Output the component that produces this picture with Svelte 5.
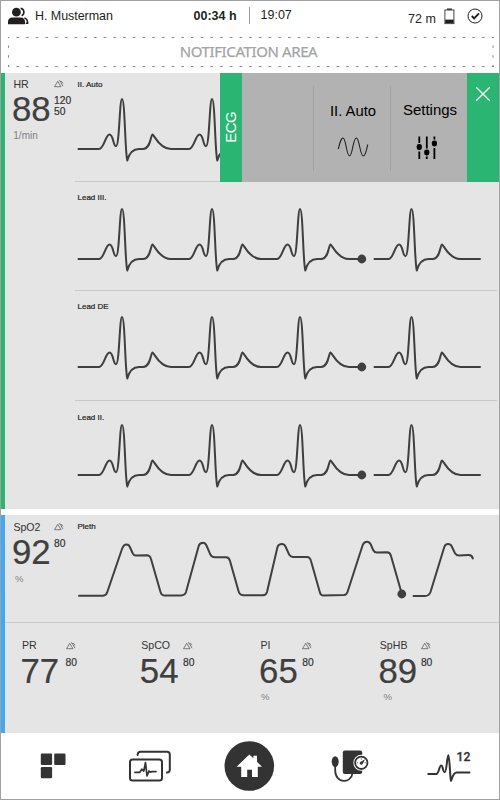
<script>
  const beat =
    'c5 0 6.5 -14.5 10.5 -14.5 s3.5 11.7 6.5 11.7 c3.5 0 3.5 -47.2 6 -47.2 c3 0 3 54 5.3 61.5 c1.7 -6.5 4.7 -11.5 11.7 -11.5 h4 c8 0 7.5 -14 9.5 -14.5 c2 .5 6.5 14.5 18.5 14.5';
  const ecg = `M3.5 60 H24 ${beat} H114 ${beat} H202 ${beat} H287 M299.5 60 H313.5 ${beat} H405`;

  const leads = [
    { label: 'II. Auto', cls: 'first' },
    { label: 'Lead III.', cls: 'second' },
    { label: 'Lead DE', cls: 'third' },
    { label: 'Lead II.', cls: 'fourth' }
  ];

  const small = [
    { label: 'PR', value: '77', limits: ['80'], unit: '', cls: 'small pr' },
    { label: 'SpCO', value: '54', limits: ['80'], unit: '', cls: 'small spco' },
    { label: 'PI', value: '65', limits: ['80'], unit: '%', cls: 'small pi' },
    { label: 'SpHB', value: '89', limits: ['80'], unit: '%', cls: 'small sphb' }
  ];
</script>

{#snippet metric(m)}
  <div class="metric {m.cls}">
    <div class="main">
      <div class="label">{m.label}</div>
      <div class="value">{m.value}</div>
      <div class="unit">{m.unit}</div>
    </div>
    <div class="side">
      <svg class="alarm" width="10" height="8" viewBox="0 0 10 8">
        <path d="M.5 6.7 L3.7 1.3 L7 6.7 Z M4.9 .9 L6 .8 L9 6.2 M7.2 .9 L8.9 3.4" />
      </svg>
      <div class="limits">
        {#each m.limits as l}<div>{l}</div>{/each}
      </div>
    </div>
  </div>
{/snippet}

<div class="device">
  <header>
    <svg class="users" width="22" height="18" viewBox="0 0 22 18">
      <circle cx="8.4" cy="5.2" r="4.4" fill="#231f20" />
      <path d="M0 17.3 V15 Q0 10.8 4.6 10.6 H12.6 Q17 10.8 17 15 V17.3 Z" fill="#231f20" />
      <path d="M12.6 1.4 A3.9 3.9 0 0 1 13.6 8.8 M16.4 11 Q19.6 11.6 19.6 16.3 H17.8" fill="none" stroke="#231f20" stroke-width="1.6" />
    </svg>
    <span class="name">H. Musterman</span>
    <span class="elapsed">00:34 h</span>
    <span class="bar"></span>
    <span class="clock">19:07</span>
    <span class="range">72 m</span>
    <svg class="battery" width="11" height="17" viewBox="0 0 11 17">
      <path d="M3 1.2 H8" stroke="#231f20" stroke-width="1.4" />
      <rect x=".9" y="2" width="9" height="13.6" fill="none" stroke="#444" stroke-width="1" />
      <rect x="1.2" y="11.6" width="8.4" height="3.4" fill="#231f20" />
    </svg>
    <svg class="check" width="16" height="16" viewBox="0 0 16 16">
      <circle cx="8" cy="8" r="7" fill="none" stroke="#231f20" stroke-width="1" />
      <path d="M4.8 8 L7.1 10.3 L12 5.4" fill="none" stroke="#231f20" stroke-width="1.9" />
    </svg>
  </header>

  <div class="notice">
    <svg width="488" height="32" viewBox="0 0 488 32">
      <path d="M1 1.5 H487 M1 30.5 H487" stroke-dasharray="2.6 7.1" stroke-dashoffset="1.3" />
      <path d="M1.5 1 V31 M486 1 V31" stroke-dasharray="2.4 7.3" stroke-dashoffset="1.2" />
    </svg>
    <span>NOTIFICATION AREA</span>
  </div>

  <section class="card ecg">
    {@render metric({ label: 'HR', value: '88', limits: ['120', '50'], unit: '1/min', cls: 'hr' })}
    <div class="leads">
      {#each leads as lead}
        <div class="lead {lead.cls}">
          <span class="tag">{lead.label}</span>
          <svg class="trace" width="423" height="76" viewBox="0 0 423 76">
            <path d={ecg} />
            <circle cx="286.8" cy="60" r="4.4" />
          </svg>
        </div>
      {/each}
    </div>
    <div class="menu">
      <div class="menu-title"><span>ECG</span></div>
      <div class="menu-empty"></div>
      <div class="menu-item auto">
        <span>II. Auto</span>
        <svg width="32" height="22" viewBox="0 0 32 22">
          <path d="M1.3 13 C3 6 4 2 6 2 C9 2 9.5 20 12.5 20 C15.5 20 16 2 19.3 2 C22.5 2 23 20 26.2 20 C28.5 20 29.5 14 30.7 8.5" fill="none" stroke="#222" stroke-width="1.1" />
        </svg>
      </div>
      <div class="menu-item settings">
        <span>Settings</span>
        <svg width="22" height="24" viewBox="0 0 22 24">
          <path d="M3.3 .5 V7 M3.3 15.5 V23 M10.8 .5 V12.5 M10.8 20.6 V23 M18.4 .5 V3.5 M18.4 12 V23" stroke="#000" stroke-width="1.8" />
          <rect x=".7" y="8" width="5.2" height="6" rx="2.3" />
          <rect x="8.2" y="13.4" width="5.2" height="6" rx="2.3" />
          <rect x="15.8" y="4.4" width="5.2" height="6" rx="2.3" />
        </svg>
      </div>
      <div class="menu-close">
        <svg width="16" height="16" viewBox="0 0 16 16">
          <path d="M1.2 1.2 L14.8 14.8 M14.8 1.2 L1.2 14.8" stroke="#fff" stroke-width="1.3" />
        </svg>
      </div>
    </div>
  </section>

  <section class="card spo2">
    <div class="upper">
      {@render metric({ label: 'SpO2', value: '92', limits: ['80'], unit: '%', cls: 'sat' })}
      <div class="pleth">
        <span class="tag">Pleth</span>
        <svg class="trace" width="423" height="70" viewBox="75 535 423 70">
          <path d="M79 595.7 H103 Q106.3 595.5 107.3 592 L122 549 Q123.5 544.5 126.5 544.5 Q129.3 544.5 130.3 548 L132.8 553.5 Q134 555.6 136 555.5 L147 555.2 Q150 555.2 151 559 L160.5 592 Q161.5 595.4 164 595.4 H181 Q185 595.3 186 592 L198.7 546 Q199.7 542.8 203 542.8 Q205.5 542.8 206.7 546 L210.5 554.8 Q211.8 557.3 215 557.3 H226 Q229 557.3 230 561 L238.5 591 Q239.5 595 243 595.2 H263 Q266 595.2 267 592 L277.5 547 Q278.5 544 282 544 Q284.5 544 285.7 547 L289.3 554.8 Q290.7 557 293 557 H307 Q310 557 311 561 L319.5 591 Q320.5 595.4 323 595.4 L344 595.1 Q346.5 595 347.5 592 L362.7 545 Q364 541.7 367 541.7 Q369.8 541.7 371 545 L373.3 550.3 Q374.5 552.7 377 552.6 L387 552.3 Q390 552.3 391 556 L401.3 592 M413.5 596 H425 Q429 596 430.5 592 L444.3 547 Q445.3 544 448 544 Q451 544 452 547 L455 553.2 Q456.3 555.4 459 555.4 L468.5 555.1 Q472 555 472.8 558.5" />
          <circle cx="401.8" cy="594" r="4.4" />
        </svg>
      </div>
    </div>
    <div class="lower">
      {#each small as m}{@render metric(m)}{/each}
    </div>
  </section>

  <nav>
    <svg width="99" height="66" viewBox="4 733 99 66">
      <rect x="40.8" y="753.6" width="11.3" height="11.3" rx="1.2" />
      <rect x="54.2" y="753.6" width="11.3" height="11.3" rx="1.2" />
      <rect x="40.8" y="767" width="11.3" height="11.3" rx="1.2" />
    </svg>
    <svg width="99" height="66" viewBox="103 733 99 66">
      <g class="line">
        <rect x="130" y="759.4" width="32" height="21.2" rx="2.6" />
        <path d="M137.6 755 V754.6 Q138 751.7 140.5 751.7 H167 Q169.8 751.7 169.8 754.5 V770 Q169.6 772.3 167 772.6" />
        <path d="M135 772.4 H139.8 L141.8 769.2 L143.8 771 L145.5 762.5 L147 776 L149 771 L150.2 772.2 L152 771.6 H156" stroke-width="1.7" />
      </g>
    </svg>
    <svg width="99" height="66" viewBox="202 733 99 66">
      <circle cx="249.3" cy="766" r="24.8" />
      <path d="M236.6 766.8 L249.3 754.4 L253.4 758.3 V755.8 H257 V761.8 L262 766.8 H257.8 V777 H252 V769.8 H247.2 V777 H241.2 V766.8 Z" fill="#fff" />
    </svg>
    <svg width="99" height="66" viewBox="301 733 99 66">
      <rect x="342.8" y="750.6" width="19.4" height="23.4" rx="2" />
      <ellipse cx="335.2" cy="761.6" rx="3.5" ry="5.4" />
      <path class="thin" d="M335.2 766 V770.5 C335.2 784 351.5 783.5 352.4 773.5" />
      <circle cx="361.3" cy="762.8" r="8" fill="#fff" />
      <circle class="thin" cx="361.3" cy="762.8" r="6.2" />
      <path d="M365 759.2 L362.6 764 A1.5 1.5 0 1 1 360.4 762 Z" />
      <path d="M356.9 762.8 h1.3 M361.3 758.4 v1.3 M364.6 762.8 h1.3" stroke="#333" stroke-width=".7" />
    </svg>
    <svg width="99" height="66" viewBox="400 733 99 66">
      <path class="line" d="M428.2 774 H436.5 C439 773.5 439.2 765.5 441.2 765.5 C443.2 765.5 442.7 772.2 444.7 772.2 C446.8 772.2 447 755.3 448.4 755.3 C449.6 755.3 450 778 451 780.8 C452.4 778 453.2 772.6 456.6 772.6 H469.5" />
      <text x="456.6" y="761">12</text>
    </svg>
  </nav>
</div>

<style>
  .device {
    box-sizing: border-box;
    width: 500px;
    height: 800px;
    border: 1px solid #a0a0a0;
    background: #fff;
    font-family: 'Liberation Sans', Arial, sans-serif;
    color: #3f3f3f;
    display: flex;
    flex-direction: column;
    overflow: hidden;
  }
  svg { display: block; flex: none; }
  span { white-space: nowrap; }

  header {
    display: flex;
    align-items: flex-start;
    height: 34px;
    flex: none;
    font-size: 12.5px;
    line-height: 16px;
    color: #231f20;
  }
  header > * { flex: none; }
  .users { margin: 6px 0 0 7px; }
  .name { margin: 7px 0 0 5px; width: 80px; letter-spacing: -.05px; }
  .elapsed { margin: 7px 0 0 78.5px; width: 47px; font-weight: bold; }
  .bar { margin: 6px 0 0 8.5px; width: 1px; height: 17px; background: #999; }
  .clock { margin: 6px 0 0 10.5px; width: 34px; }
  .range { margin: 10px 0 0 113.5px; width: 30px; }
  .battery { margin: 7px 0 0 6px; }
  .check { margin: 7px 0 0 12px; }

  .notice {
    height: 37.5px;
    flex: none;
    display: grid;
    justify-content: start;
    align-content: start;
    padding: 1px 0 0 6px;
    box-sizing: border-box;
  }
  .notice svg, .notice span { grid-area: 1 / 1; }
  .notice path { fill: none; stroke: #888; stroke-width: 1; }
  .notice span {
    justify-self: center;
    align-self: start;
    margin-top: 5px;
    font-family: 'Noto Sans', sans-serif;
    font-size: 15px;
    letter-spacing: -.39px;
    color: #a3a4a6;
    -webkit-text-stroke: .25px #a3a4a6;
    line-height: 20px;
    margin-right: 5px;
  }

  .card { display: flex; background: #e5e5e5; flex: none; box-sizing: border-box; }
  .ecg { height: 436.2px; border-left: 4px solid #2ab573; position: relative; }
  .spo2 { margin-top: 6.3px; height: 218px; border-left: 4px solid #3fa9f5; flex-direction: column; }
  .upper { display: flex; height: 107px; border-bottom: 1px solid #c9c9c9; }
  .lower { display: grid; grid-template-columns: repeat(4, 119.3px); padding-left: 15.5px; }

  .metric { display: flex; box-sizing: border-box; flex: none; }
  .label { font-size: 10.6px; line-height: 12px; color: #333; padding-left: 1.4px; }
  .value { font-size: 34.8px; line-height: 35px; -webkit-text-stroke: .2px #3f3f3f; }
  .unit { font-size: 10px; line-height: 12px; color: #808080; padding-left: 1.3px; }
  .limits { font-size: 10.3px; line-height: 11.3px; color: #333; -webkit-text-stroke: .2px #333; }
  .alarm path { fill: none; stroke: #555; stroke-width: .75; }

  .hr, .sat { width: 70px; padding-left: 7px; }
  .hr { padding-top: 5.5px; }
  .hr .main, .sat .main { width: 42px; }
  .hr .side { padding-top: 2px; }
  .hr .limits { margin-top: 6.5px; }
  .hr .value { margin-top: 1px; }
  .hr .unit { margin-top: 3.5px; }
  .sat { padding-top: 6px; }
  .sat .value { margin-top: 1.5px; }
  .sat .unit { margin-top: 3.5px; font-size: 9.5px; padding-left: 3px; }
  .sat .side { padding-top: 2px; }
  .sat .limits { margin-top: 7.5px; }

  .small { padding-top: 16px; }
  .small .main { width: 45px; }
  .small .value { margin-top: 2px; }
  .small .unit { margin-top: 3px; font-size: 9.5px; padding-left: 2px; }
  .small .side { padding-top: 3px; }
  .small .limits { margin-top: 7.5px; }
  .spco .main, .pi .main { width: 43.2px; }
  .sphb .main { width: 42.5px; }
  .sphb .unit { padding-left: 5px; }

  .leads { width: 423px; }
  .lead { box-sizing: border-box; border-bottom: 1px solid #c9c9c9; display: flex; flex-direction: column; width: 422px; }
  .tag { font-size: 8px; line-height: 10px; padding-left: 2.5px; color: #222; -webkit-text-stroke: .2px #222; }
  .trace path { fill: none; stroke: #3f3f3f; stroke-width: 2; stroke-linecap: round; stroke-linejoin: round; }
  .trace circle { fill: #3f3f3f; }
  .first { height: 109px; padding-top: 7px; }
  .second { height: 109.5px; padding-top: 11px; }
  .third { height: 109.5px; padding-top: 10.5px; }
  .fourth { height: 108px; padding-top: 12px; border-bottom: 0; }
  .first .trace { margin-top: -.5px; }
  .second .trace { margin-top: -3.5px; }
  .third .trace { margin-top: -4.5px; }
  .fourth .trace { margin-top: -7.5px; }
  .pleth { display: flex; flex-direction: column; padding-top: 7.5px; }
  .pleth .trace { margin-top: 2.5px; }

  .menu {
    position: absolute;
    left: 215px;
    top: 0;
    display: flex;
    width: 279px;
    height: 109.5px;
    background: #b2b2b2;
    color: #000;
    font-size: 15px;
    line-height: 18px;
  }
  .menu-title { width: 22px; background: #2ab573; display: flex; align-items: center; justify-content: center; color: #fff; }
  .menu-title span { writing-mode: vertical-rl; transform: rotate(180deg); font-size: 15px; letter-spacing: -.6px; line-height: 18px; }
  .menu-empty { width: 70.5px; }
  .menu-item { width: 77px; height: 85px; margin-top: 13px; border-left: 1.5px solid #a2a2a2; display: flex; flex-direction: column; align-items: center; box-sizing: border-box; }
  .auto span { margin: 16px 0 0 3px; font-size: 14.8px; }
  .auto svg { margin: 16.5px 0 0 3px; }
  .settings span { margin: 15px 0 0 3px; }
  .settings svg { margin: 17.5px 4px 0 0; }
  .menu-close { flex: 1; background: #2ab573; display: flex; justify-content: center; align-items: flex-start; padding-top: 13.5px; }

  nav { display: flex; padding-left: 3px; height: 66px; fill: #333; }
  .line { fill: none; stroke: #333; stroke-width: 2; stroke-linecap: round; stroke-linejoin: round; }
  .thin { fill: none; stroke: #333; stroke-width: 1.8; }
  nav text { font-family: Roboto, sans-serif; font-size: 12.2px; font-weight: 500; stroke: #333; stroke-width: .3px; }
</style>
